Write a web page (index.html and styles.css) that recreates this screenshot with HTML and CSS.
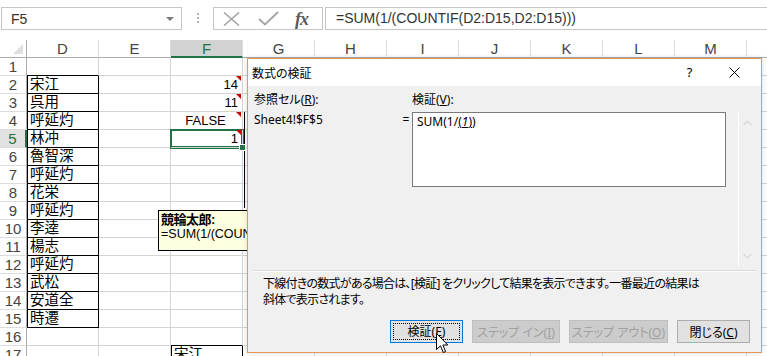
FILE: index.html
```html
<!DOCTYPE html>
<html lang="ja">
<head>
  <meta charset="UTF-8" />
  <title>数式の検証</title>
  <link rel="stylesheet" href="styles.css">
</head>
<body>
  <div class="app">
    <div class="formula-bar">
      <div class="name-box"><span>F5</span><span class="dd"></span></div>
      <div class="grip"><i></i><i></i><i></i></div>
      <div class="fx-buttons">
        <svg class="ic-x" width="17" height="14" viewBox="0 0 17 14"><path d="M1 0.5 L16 13.5 M16 0.5 L1 13.5" stroke="#a6a6a6" stroke-width="1.6" fill="none"/></svg>
        <svg class="ic-ok" width="21" height="15" viewBox="0 0 21 15"><path d="M1 8 L7 13.5 L20 1" stroke="#a6a6a6" stroke-width="2" fill="none"/></svg>
        <span class="ic-fx">fx</span>
      </div>
      <div class="formula-input">=SUM(1/(COUNTIF(D2:D15,D2:D15)))</div>
    </div>

    <div class="sheet" id="sheet"></div>

    <!-- comment and its connector -->
    <div class="connector"></div>
    <div class="comment">
      <div class="author">競輪太郎:</div>
      <div>=SUM(1/(COUNTIF(D2:D15,D2:D15)))</div>
    </div>

    <!-- Evaluate Formula dialog -->
    <div class="dialog">
      <div class="dlg-title">
        <span class="t">数式の検証</span>
        <span class="tb-btn help">?</span>
        <span class="tb-btn"><svg width="11" height="11" viewBox="0 0 11 11"><path d="M0.5 0.5 L10.5 10.5 M10.5 0.5 L0.5 10.5" stroke="#000" stroke-width="1" fill="none"/></svg></span>
      </div>
      <div class="dlg-body">
        <div class="eval-grid">
          <div>参照セル(<u>R</u>):</div>
          <div></div>
          <div>検証(<u>V</u>):</div>
          <div></div>
          <div class="ref">Sheet4!$F$5</div>
          <div class="eq">=</div>
          <div class="eval-box">SUM(1/<span class="cur">(<i>1</i>)</span>)</div>
          <div class="scroll">
            <svg width="9" height="6" viewBox="0 0 9 6"><path d="M0.5 5 L4.5 1 L8.5 5" stroke="#c2c2c2" fill="none"/></svg>
            <svg width="9" height="6" viewBox="0 0 9 6"><path d="M0.5 1 L4.5 5 L8.5 1" stroke="#c2c2c2" fill="none"/></svg>
          </div>
        </div>
        <div class="sep"></div>
        <p class="desc">下線付きの数式がある場合は、[検証] をクリックして結果を表示できます。一番最近の結果は<br>斜体で表示されます。</p>
        <div class="buttons">
          <button class="btn focus w73"><span>検証(<u>E</u>)</span></button>
          <button class="btn off w88">ステップ イン(<u>I</u>)</button>
          <button class="btn off w99">ステップ アウト(<u>O</u>)</button>
          <button class="btn w73">閉じる(<u>C</u>)</button>
        </div>
      </div>
    </div>

    <svg class="cursor" width="13" height="21" viewBox="0 0 13 21"><path d="M0.5 0.5 L0.5 16.5 L4.5 12.8 L7.3 19.5 L9.6 18.5 L6.9 12 L11.8 12 Z" fill="#fff" stroke="#000" stroke-width="1"/></svg>
  </div>

  <script>
    const cols = ["D", "E", "F", "G", "H", "I", "J", "K", "L", "M", "N"];
    const values = {
      D2: "宋江", D3: "呉用", D4: "呼延灼", D5: "林冲", D6: "魯智深", D7: "呼延灼", D8: "花栄",
      D9: "呼延灼", D10: "李逵", D11: "楊志", D12: "呼延灼", D13: "武松", D14: "安道全", D15: "時遷",
      F2: "14", F3: "11", F4: "FALSE", F5: "1", F17: "宋江"
    };
    const numbers = ["F2", "F3", "F5"];
    const notes = ["F2", "F3", "F4", "F5"];

    function isBoxed(ref) {
      const col = ref[0], row = +ref.slice(1);
      return (col === "D" && row >= 2 && row <= 15) || ref === "F17";
    }

    const sheet = document.getElementById("sheet");

    function cell(cls, text) {
      const div = document.createElement("div");
      div.className = cls;
      if (text) div.textContent = text;
      sheet.appendChild(div);
      return div;
    }

    // header row
    cell("corner");
    cols.forEach(c => cell(c === "F" ? "ch hsel" : "ch", c));

    for (let r = 1; r <= 17; r++) {
      cell(r === 5 ? "rh rsel" : "rh", String(r));
      cols.forEach(c => {
        const ref = c + r;
        let cls = "c";
        if (isBoxed(ref)) cls += " boxed";
        if (isBoxed(c + (r + 1))) cls += " above";
        if (numbers.includes(ref)) cls += " r";
        if (ref === "F4") cls += " mid";
        if (notes.includes(ref)) cls += " note";
        if (ref === "F5") cls += " sel";
        cell(cls, values[ref]);
      });
    }
  </script>
</body>
</html>
```

FILE: styles.css
```css
body { margin: 0; background: #fff; font-family: "Liberation Sans", "Noto Sans CJK JP", sans-serif; overflow: hidden; }
.app { position: relative; width: 767px; height: 356px; overflow: hidden; }

/* formula bar */
.formula-bar {
  display: flex;
  align-items: flex-start;
  height: 40px;
  padding-top: 7px;
  box-sizing: border-box;
}

.name-box {
  width: 181px;
  height: 23px;
  margin-left: 1px;
  box-sizing: border-box;
  border: 1px solid #c6c6c6;
  display: flex;
  align-items: center;
  justify-content: space-between;
  padding: 0 7px 0 9px;
  font-size: 14px;
  color: #333;
}

.name-box .dd {
  width: 0;
  height: 0;
  border-left: 4px solid transparent;
  border-right: 4px solid transparent;
  border-top: 4px solid #7a7a7a;
}

.grip {
  width: 31px;
  display: flex;
  flex-direction: column;
  align-items: center;
  gap: 2px;
  padding-top: 6px;
}
.grip i { width: 2px; height: 2px; background: #b4b4b4; }

.fx-buttons {
  width: 110px;
  height: 23px;
  box-sizing: border-box;
  border: 1px solid #c6c6c6;
  display: flex;
  align-items: center;
  padding-left: 9px;
}
.ic-x { margin-right: 18px; }
.ic-ok { margin-right: 16px; }
.ic-fx {
  font-family: "Liberation Serif", serif;
  font-style: italic;
  font-weight: bold;
  font-size: 18px;
  color: #5a5a5a;
  letter-spacing: -1px;
  line-height: 18px;
}

.formula-input {
  flex: 1;
  height: 23px;
  margin-left: 2px;
  box-sizing: border-box;
  border: 1px solid #c6c6c6;
  border-right: none;
  padding-left: 10px;
  font-size: 14px;
  line-height: 21px;
  color: #333;
  white-space: nowrap;
}

/* grid */
.sheet {
  display: grid;
  grid-template-columns: 27px repeat(11, 72px);
  grid-auto-rows: 18px;
}

.sheet > div {
  box-sizing: border-box;
  white-space: nowrap;
  overflow: hidden;
  position: relative;
}

.corner { border-right: 1px solid #ababab; border-bottom: 1px solid #ababab; }
.corner::after {
  content: "";
  position: absolute;
  right: 3px;
  bottom: 3px;
  border-left: 10px solid transparent;
  border-bottom: 10px solid #dfdfdf;
}

.ch {
  border-right: 1px solid #dcdcdc;
  border-bottom: 1px solid #ababab;
  text-align: center;
  font-size: 15px;
  line-height: 18px;
  color: #444;
}
.ch.hsel { background: #d2d2d2; color: #217346; border-bottom: 2px solid #217346; }

.rh {
  border-right: 1px solid #ababab;
  border-bottom: 1px solid #dcdcdc;
  text-align: center;
  font-size: 15px;
  line-height: 18px;
  color: #444;
}
.rh.rsel { background: #e1e1e1; color: #217346; border-right: 2px solid #217346; }

.c {
  border-right: 1px solid #d4d4d4;
  border-bottom: 1px solid #d4d4d4;
  padding: 0 4px 0 2px;
  font-size: 14.5px;
  line-height: 17px;
  color: #000;
}
.c.boxed { border-left: 1px solid #000; border-right: 1px solid #000; border-bottom: 1px solid #000; }
.c.above { border-bottom: 1px solid #000; }
.c.r { text-align: right; font-size: 13px; }
.c.mid { text-align: center; font-size: 13px; }

.c.note::before {
  content: "";
  position: absolute;
  right: 1px;
  top: 0;
  border-left: 5px solid transparent;
  border-top: 5px solid #c00000;
}

.c.sel { overflow: visible; z-index: 1; box-shadow: 0 0 0 1px #217346, inset 0 0 0 1px #217346; }
.c.sel::after {
  content: "";
  position: absolute;
  right: -4px;
  bottom: -4px;
  width: 5px;
  height: 5px;
  background: #217346;
  border: 1px solid #fff;
}

/* comment */
.connector {
  position: absolute;
  left: 244px;
  top: 112px;
  width: 1px;
  height: 96px;
  background: #000;
}

.comment {
  position: absolute;
  left: 158px;
  top: 210px;
  width: 110px;
  height: 41px;
  box-sizing: border-box;
  border: 1px solid #000;
  background: #ffffe1;
  padding: 1px 2px;
  font-size: 12.5px;
  line-height: 15px;
  white-space: nowrap;
  overflow: hidden;
}
.comment .author { font-weight: bold; font-size: 13px; letter-spacing: -0.5px; }

/* dialog */
.dialog {
  position: absolute;
  left: 247px;
  top: 58px;
  width: 515px;
  height: 295px;
  box-sizing: border-box;
  border: 1px solid #e0995a;
  background: #f0f0f0;
  box-shadow: 0 0 5px rgba(0,0,0,0.15);
  display: flex;
  flex-direction: column;
  font-family: "Noto Sans", "Noto Sans CJK JP", sans-serif;
  font-feature-settings: "palt";
  font-size: 12px;
  color: #000;
}

.dlg-title {
  height: 27px;
  background: #fff;
  display: flex;
  align-items: center;
  padding: 0 4px 0 4px;
}
.dlg-title .t { flex: 1; }
.tb-btn { width: 45px; text-align: center; line-height: 11px; }
.tb-btn.help { font-size: 13px; }

.dlg-body {
  flex: 1;
  display: flex;
  flex-direction: column;
  padding: 5px 5px 9px 6px;
}

.eval-grid {
  display: grid;
  grid-template-columns: 146px 12px 314px 1fr;
  grid-template-rows: 18px 154px;
  row-gap: 3px;
  line-height: 18px;
}
.ref, .eq { line-height: 16px; }
.eq { text-align: center; }

.eval-box {
  height: 75px;
  box-sizing: border-box;
  border: 1px solid #7a7a7a;
  background: #fff;
  padding: 0 4px;
  line-height: 17px;
}
.eval-box .cur { text-decoration: underline; }

.scroll {
  justify-self: end;
  width: 18px;
  box-sizing: border-box;
  border-left: 1px solid #fff;
  display: flex;
  flex-direction: column;
  justify-content: space-between;
  align-items: center;
  padding: 8px 0 7px;
}

.sep {
  margin-top: 4px;
  border-top: 1px solid #dadada;
  border-bottom: 1px solid #fbfbfb;
}

.desc {
  margin: 4px 0 0;
  padding-left: 9px;
  line-height: 16px;
  letter-spacing: -0.75px;
  white-space: nowrap;
}

.buttons {
  display: flex;
  justify-content: flex-end;
  margin-top: 12px;
  margin-right: 6px;
  gap: 9px;
}

.btn {
  height: 23px;
  box-sizing: border-box;
  border: 1px solid #adadad;
  background: #e1e1e1;
  font-family: inherit;
  font-feature-settings: "palt";
  font-size: 12px;
  color: #000;
  padding: 0;
}
.btn.w73 { width: 73px; }
.btn.w88 { width: 88px; }
.btn.w99 { width: 99px; }
.btn.off { background: #cccccc; border-color: #bfbfbf; color: #a0a0a0; }
.btn.focus { border-color: #0078d7; padding: 2px; }
.btn.focus span {
  display: block;
  height: 100%;
  box-sizing: border-box;
  border: 1px dotted #000;
  line-height: 15px;
}

.cursor { position: absolute; left: 436px; top: 333px; }
```
